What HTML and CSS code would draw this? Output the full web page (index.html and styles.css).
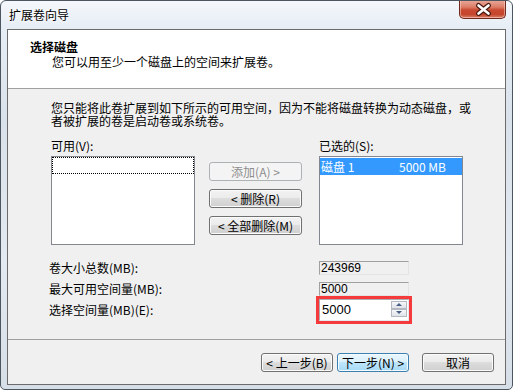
FILE: index.html
```html
<!DOCTYPE html>
<html lang="zh-CN">
<head>
    <meta charset="UTF-8">
    <title>扩展卷向导</title>
    <link rel="stylesheet" href="styles.css">
</head>
<body>
    <div class="window">
        <div class="titlebar">
            <span class="title">扩展卷向导</span>
            <div class="close">
                <svg width="47" height="18" viewBox="0 0 47 18">
                    <path d="M18.5 5.5 L28.5 13.5 M28.5 5.5 L18.5 13.5" stroke="#4a1a12" stroke-width="5" stroke-linecap="round"/>
                    <path d="M18.5 5.5 L28.5 13.5 M28.5 5.5 L18.5 13.5" stroke="#fff" stroke-width="2.6" stroke-linecap="round"/>
                </svg>
            </div>
        </div>

        <div class="client">
            <div class="header">
                <div class="header-title">选择磁盘</div>
                <div class="header-sub">您可以用至少一个磁盘上的空间来扩展卷。</div>
            </div>

            <div class="body">
                <div class="main">
                    <p class="intro">您只能将此卷扩展到如下所示的可用空间，因为不能将磁盘转换为动态磁盘，或<br>者被扩展的卷是启动卷或系统卷。</p>

                    <div class="pickers">
                        <div class="picker">
                            <div class="label">可用(V):</div>
                            <div class="listbox">
                                <div class="focus-row"></div>
                            </div>
                        </div>

                        <div class="move-buttons">
                            <button class="btn" disabled>添加(A) &gt;</button>
                            <button class="btn">&lt; 删除(R)</button>
                            <button class="btn">&lt; 全部删除(M)</button>
                        </div>

                        <div class="picker picker-right">
                            <div class="label">已选的(S):</div>
                            <div class="listbox">
                                <div class="list-row selected">
                                    <span class="disk-name">磁盘 1</span>
                                    <span class="disk-size">5000 MB</span>
                                </div>
                            </div>
                        </div>
                    </div>

                    <div class="fields">
                        <div class="field">
                            <span class="field-label">卷大小总数(MB):</span>
                            <div class="readonly">243969</div>
                        </div>
                        <div class="field">
                            <span class="field-label">最大可用空间量(MB):</span>
                            <div class="readonly">5000</div>
                        </div>
                        <div class="field">
                            <span class="field-label">选择空间量(MB)(E):</span>
                            <div class="spin">
                                <span class="spin-value">5000</span>
                                <div class="spin-buttons">
                                    <div class="spin-btn"><span class="arrow-up"></span></div>
                                    <div class="spin-btn"><span class="arrow-down"></span></div>
                                </div>
                            </div>
                        </div>
                    </div>
                </div>

                <div class="footer">
                    <button class="btn btn-wide">&lt; 上一步(B)</button>
                    <button class="btn btn-wide btn-default">下一步(N) &gt;</button>
                    <button class="btn btn-wide btn-cancel">取消</button>
                </div>
            </div>
        </div>
    </div>
</body>
</html>
```

FILE: styles.css
```css
* {
    box-sizing: border-box;
}
body {
    margin: 0;
    background-color: #fff;
    font-family: "Noto Sans CJK SC", "Liberation Sans", sans-serif;
    font-size: 12px;
    color: #000;
}
.window {
    width: 513px;
    height: 390px;
    border: 1px solid #4c5560;
    border-radius: 6px 6px 5px 5px;
    background: linear-gradient(#f4f7fb, #e6edf5 28px, #d9e1ea 120px, #e3e9f0 260px, #d6dee7);
    padding: 0 6px 4px;
    display: flex;
    flex-direction: column;
    overflow: hidden;
}
.titlebar {
    height: 28px;
    display: flex;
    justify-content: space-between;
    align-items: flex-start;
    padding-left: 2px;
}
.title {
    margin-top: 8px;
    line-height: 12px;
    text-shadow: 0 0 5px #fff, 0 0 3px #fff;
}
.close {
    width: 47px;
    height: 19px;
    margin-top: -1px;
    border: 1px solid #70291e;
    border-top: none;
    border-radius: 0 0 5px 5px;
    background: linear-gradient(#e9ab9c, #dc7c66 40%, #c94a31 55%, #c4452c 80%, #d9826b);
    box-shadow: inset 0 0 0 1px rgba(255, 220, 210, 0.5);
}
.close svg {
    display: block;
}
.client {
    flex: 1;
    border: 1px solid #6b6b6b;
    background-color: #f0f0f0;
    display: flex;
    flex-direction: column;
}
.header {
    height: 59px;
    background-color: #fff;
    border-bottom: 1px solid #a0a0a0;
    padding: 9px 22px 0;
}
.header-title {
    font-weight: bold;
    line-height: 15px;
}
.header-sub {
    line-height: 15px;
    padding-left: 22px;
}
.body {
    flex: 1;
    display: flex;
    flex-direction: column;
}
.main {
    flex: 1;
    padding: 12px 0 0 43px;
}
.intro {
    margin: 0;
    line-height: 13px;
    white-space: nowrap;
}
.pickers {
    display: flex;
    align-items: flex-start;
    margin-top: 13px;
}
.picker {
    width: 144px;
}
.picker-right {
    margin-left: 17px;
}
.label {
    line-height: 12px;
    white-space: nowrap;
}
.listbox {
    height: 89px;
    margin-top: 4px;
    border: 1px solid #828790;
    background-color: #fff;
}
.focus-row {
    height: 17px;
    border: 1px dotted #000;
}
.list-row {
    height: 17px;
    margin-top: 1px;
    display: flex;
    align-items: center;
    line-height: 16px;
    white-space: nowrap;
}
.selected {
    background-color: #3399ff;
    color: #fff;
}
.disk-name {
    width: 79px;
    padding-left: 1px;
}
.move-buttons {
    width: 93px;
    margin-left: 14px;
    margin-top: 22px;
    display: flex;
    flex-direction: column;
    gap: 8px;
}
.btn {
    height: 19px;
    padding: 0;
    font-family: inherit;
    font-size: 12px;
    line-height: 17px;
    color: #000;
    border: 1px solid #707070;
    border-radius: 3px;
    background: linear-gradient(#f2f2f2, #ebebeb 49%, #dddddd 50%, #cfcfcf);
    box-shadow: inset 0 0 0 1px #fbfbfb;
    white-space: nowrap;
}
.btn:disabled {
    color: #8d8d8d;
    border-color: #adb2b5;
    background: #f4f4f4;
    box-shadow: none;
}
.fields {
    margin-top: 12px;
    margin-left: -2px;
}
.field {
    height: 21px;
    display: flex;
    align-items: center;
}
.field-label {
    width: 270px;
    line-height: 12px;
    white-space: nowrap;
}
.readonly {
    width: 90px;
    height: 14px;
    border: 1px solid;
    border-color: #a0a0a0 #e3e3e3 #e3e3e3 #a0a0a0;
    background-color: #f0f0f0;
    font-family: "Liberation Sans", sans-serif;
    font-size: 12px;
    line-height: 12px;
    padding-left: 1px;
}
.spin {
    width: 90px;
    height: 22px;
    outline: 3px solid #f43a3a;
    border: 1px solid;
    border-color: #abadb3 #e3e9ef #e3e9ef #abadb3;
    background-color: #fff;
    display: flex;
    align-items: center;
    justify-content: space-between;
    padding: 0 1px 0 2px;
}
.spin-value {
    font-family: "Liberation Sans", sans-serif;
    font-size: 13px;
    line-height: 14px;
}
.spin-buttons {
    width: 16px;
    display: flex;
    flex-direction: column;
    margin-top: -2px;
}
.spin-btn {
    height: 8px;
    border: 1px solid #b4b8c0;
    background: linear-gradient(#f6f7f9, #dfe3e9);
    display: flex;
    align-items: center;
    justify-content: center;
}
.arrow-up {
    border-left: 3px solid transparent;
    border-right: 3px solid transparent;
    border-bottom: 3px solid #4a5f86;
}
.arrow-down {
    border-left: 3px solid transparent;
    border-right: 3px solid transparent;
    border-top: 3px solid #4a5f86;
}
.footer {
    border-top: 1px solid #a0a0a0;
    padding: 13px 11px 12px;
    display: flex;
    justify-content: flex-end;
    gap: 4px;
}
.btn-wide {
    width: 72px;
}
.btn-default {
    border-color: #3c7fb1;
    background: linear-gradient(#eaf6fd, #d9f0fc 49%, #bee6fd 50%, #a7d9f5);
    box-shadow: inset 0 0 0 1px #f4fbff;
}
.btn-cancel {
    margin-left: 9px;
}
```
